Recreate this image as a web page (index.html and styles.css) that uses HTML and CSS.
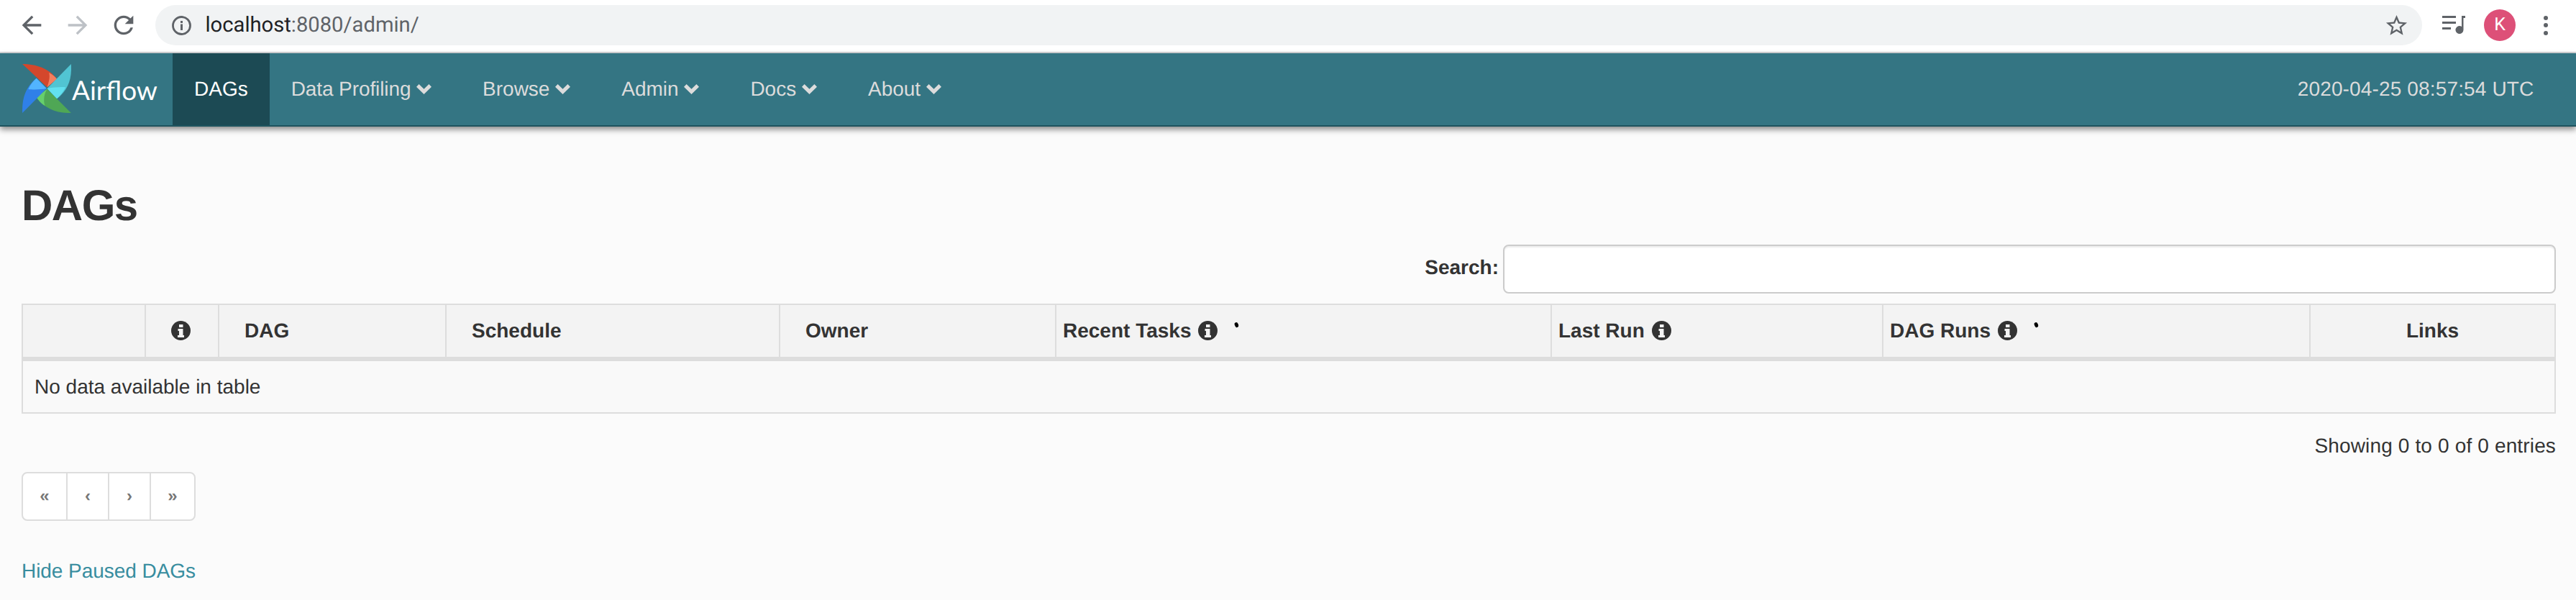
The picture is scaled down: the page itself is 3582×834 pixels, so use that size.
FILE: index.html
```html
<!DOCTYPE html>
<html lang="en">
<head>
<meta charset="utf-8">
<title>DAGs - Airflow</title>
<link rel="stylesheet" href="styles.css">
</head>
<body>
<svg class="defs" width="0" height="0" aria-hidden="true">
  <symbol id="info" viewBox="0 0 27 27">
    <circle cx="13.5" cy="13.5" r="13.5" fill="#333"/>
    <path fill="#f3f3f3" d="M11 5h5.5v4H11zM9.5 11h7v9H18v3H9v-3h2v-6H9.500z"/>
  </symbol>
  <symbol id="chev" viewBox="0 0 21 15">
    <path fill="currentColor" d="M0 5.200 3.600 1.500 10.500 8.300 17.400 1.500 21 5.200 10.500 15.500z"/>
  </symbol>
</svg>

<header class="toolbar">
  <span class="tool-btn"><svg class="ic40" viewBox="0 0 24 24"><path d="M20 11H7.830l5.590-5.590L12 4l-8 8 8 8 1.410-1.410L7.830 13H20v-2z"/></svg></span>
  <span class="tool-btn off"><svg class="ic40" viewBox="0 0 24 24"><path d="M12 4l-1.410 1.410L16.170 11H4v2h12.170l-5.580 5.590L12 20l8-8z"/></svg></span>
  <span class="tool-btn"><svg class="ic40" viewBox="0 0 24 24"><path d="M17.650 6.350A7.958 7.958 0 0 0 12 4c-4.420 0-7.990 3.580-7.990 8s3.570 8 7.990 8c3.730 0 6.840-2.550 7.730-6h-2.080A5.990 5.990 0 0 1 12 18c-3.310 0-6-2.690-6-6s2.690-6 6-6c1.660 0 3.140.690 4.220 1.780L13 11h7V4l-2.350 2.350z"/></svg></span>
  <div class="omnibox">
    <svg class="site-info" viewBox="0 0 27 27"><circle cx="13.500" cy="13.500" r="12" fill="none" stroke="#5f6368" stroke-width="2.800"/><path fill="#5f6368" d="M12 11.500h3V20h-3zM12 7h3v3h-3z"/></svg>
    <span class="url"><span class="host">localhost</span>:8080/admin/</span>
    <svg class="star" viewBox="0 0 24 24"><path d="M22 9.240l-7.190-.620L12 2 9.190 8.630 2 9.240l5.460 4.730L5.820 21 12 17.270 18.180 21l-1.630-7.030L22 9.240zM12 15.400l-3.760 2.270 1-4.280-3.320-2.880 4.380-.380L12 6.100l1.710 4.040 4.380.380-3.320 2.880 1 4.280L12 15.400z"/></svg>
  </div>
  <svg class="media" viewBox="0 0 32 26"><path d="M0 0h19v3H0zM0 8h19v3H0zM0 16h12v3H0zM27 0h5v3h-2.500v16.500a5.500 5.500 0 1 1-2.500-4.600z"/></svg>
  <span class="avatar">K</span>
  <span class="dots"><i></i><i></i><i></i></span>
</header>

<nav class="navbar">
  <a class="brand">
    <svg class="logo" viewBox="93 92 205 206">
      <path fill="#d4472c" d="M93 92C150 92 205 110 238 155L197 190Z"/>
      <path fill="#f47f5f" d="M205 128C222 138 232 146 238 155L197 190C205 165 210 148 205 128Z"/>
      <path fill="#51c4d2" d="M298 92C302 150 288 200 238 238L197 195Z"/>
      <path fill="#62e0ef" d="M197 195C225 190 255 188 275 190C265 210 250 228 238 238Z"/>
      <path fill="#4fa755" d="M298 298C240 300 185 280 152 232L197 197Z"/>
      <path fill="#66cf6c" d="M197 197L152 232C165 250 175 260 188 268C180 245 185 215 197 197Z"/>
      <path fill="#2f80e8" d="M93 298C90 240 105 190 152 152L195 195Z"/>
      <path fill="#52b4ff" d="M152 152L195 195C170 200 135 200 118 198C125 180 138 165 152 152Z"/>
    </svg>
    <span class="brand-name">Airflow</span>
  </a>
  <a class="nav-item active">DAGs</a>
  <a class="nav-item menu tight">Data Profiling <svg class="chev"><use href="#chev"/></svg></a>
  <a class="nav-item menu">Browse <svg class="chev"><use href="#chev"/></svg></a>
  <a class="nav-item menu">Admin <svg class="chev"><use href="#chev"/></svg></a>
  <a class="nav-item menu">Docs <svg class="chev"><use href="#chev"/></svg></a>
  <a class="nav-item menu">About <svg class="chev"><use href="#chev"/></svg></a>
  <span class="clock">2020-04-25 08:57:54 UTC</span>
</nav>

<main class="page">
  <h1 class="title">DAGs</h1>
  <div class="search-row">
    <label class="search-label" for="q">Search:</label>
    <input class="search-input" id="q" type="search">
  </div>
  <table class="dags">
    <colgroup>
      <col class="c1"><col class="c2"><col class="c3"><col class="c4"><col class="c5"><col class="c6"><col class="c7"><col class="c8"><col class="c9">
    </colgroup>
    <thead>
      <tr>
        <th></th>
        <th class="center icon-col"><svg class="info"><use href="#info"/></svg></th>
        <th class="wide">DAG</th>
        <th class="wide">Schedule</th>
        <th class="wide">Owner</th>
        <th>Recent Tasks <svg class="info spaced"><use href="#info"/></svg><i class="tick"></i></th>
        <th>Last Run <svg class="info spaced"><use href="#info"/></svg></th>
        <th>DAG Runs <svg class="info spaced"><use href="#info"/></svg><i class="tick"></i></th>
        <th class="center">Links</th>
      </tr>
    </thead>
    <tbody>
      <tr><td colspan="9">No data available in table</td></tr>
    </tbody>
  </table>
  <div class="entries">Showing 0 to 0 of 0 entries</div>
  <div class="pager">
    <a>«</a><a>‹</a><a>›</a><a>»</a>
  </div>
  <a class="toggle">Hide Paused DAGs</a>
</main>
</body>
</html>
```

FILE: styles.css
```css
* { box-sizing: border-box; }
html, body { margin: 0; padding: 0; }
body {
  background: #fbfbfb;
  color: #333;
  font-family: "Liberation Sans", Arial, sans-serif;
  font-size: 28px;
  line-height: 40px;
  text-rendering: geometricPrecision;
  height: 834px;
  overflow: hidden;
}
.defs { position: absolute; }

/* browser toolbar */
.toolbar {
  display: flex;
  align-items: center;
  height: 74px;
  padding: 0 39px 2px 12px;
  background: #fff;
  border-bottom: 2px solid #d6d7d9;
}
.tool-btn { width: 64px; display: flex; justify-content: center; fill: #5f6368; }
.tool-btn.off { fill: #bdc1c6; }
.ic40 { width: 40px; height: 40px; display: block; }
.omnibox {
  flex: 1;
  margin-left: 12px;
  height: 56px;
  border-radius: 28px;
  background: #f1f3f4;
  display: flex;
  align-items: center;
  padding: 0 18px 0 23px;
}
.site-info { width: 27px; height: 27px; flex: none; }
.url {
  flex: 1;
  margin-left: 19.500px;
  font-family: Roboto, "Liberation Sans", sans-serif;
  font-size: 29.200px;
  color: #5f6368;
}
.host { color: #202124; }
.star { width: 35px; height: 35px; fill: #5f6368; }
.media { width: 32px; height: 26px; margin-left: 28px; fill: #5f6368; }
.avatar {
  width: 44px;
  height: 44px;
  margin-left: 26px;
  border-radius: 50%;
  background: #dd5078;
  color: #fff;
  font-family: Roboto, "Liberation Sans", sans-serif;
  font-size: 25px;
  line-height: 44px;
  text-align: center;
}
.dots { display: flex; flex-direction: column; gap: 4.500px; margin-left: 39px; }
.dots i { width: 6px; height: 6px; border-radius: 50%; background: #5f6368; }

/* airflow navbar */
.navbar {
  display: flex;
  align-items: stretch;
  height: 102px;
  background: #347583;
  border-bottom: 2px solid #1e545f;
  box-shadow: 0 4px 8px rgba(0, 0, 0, .45);
  position: relative;
  color: #dcdcdc;
}
.brand {
  width: 240px;
  padding-left: 31px;
  display: flex;
  align-items: center;
}
.logo { width: 68px; height: 68px; flex: none; margin-top: -2px; }
.brand-name {
  margin-left: 1px;
  font-family: Lato, "Liberation Sans", sans-serif;
  font-size: 37px;
  color: #fff;
  margin-top: 2px;
}
.nav-item { display: flex; align-items: center; padding: 0 30px; white-space: pre; }
.nav-item.active { background: #1c4a54; color: #fff; }
.nav-item.menu { padding-right: 41px; }
.nav-item.tight { letter-spacing: -.1px; }
.chev { width: 21px; height: 16px; margin-top: -3px; }
.clock { margin-left: auto; padding-right: 58.500px; align-self: center; letter-spacing: .15px; }

/* page */
.page { padding: 0 28px 0 30px; }
.title {
  margin: 77px 0 21px;
  font-size: 60px;
  line-height: 66px;
  font-weight: 700;
  letter-spacing: -1.500px;
}
.search-row { display: flex; justify-content: flex-end; align-items: flex-start; gap: 6px; }
.search-label { font-weight: 700; padding-top: 12px; }
.search-input {
  width: 1464px;
  height: 68px;
  background: #fff;
  border: 2px solid #ccc;
  border-radius: 8px;
  box-shadow: inset 0 2px 2px rgba(0, 0, 0, .075);
  outline: 0;
}

.dags {
  width: 100%;
  margin-top: 14px;
  table-layout: fixed;
  border-collapse: separate;
  border-spacing: 0;
  border: 2px solid #ddd;
  background: #f9f9f9;
}
.c1 { width: 171px; }
.c2 { width: 102px; }
.c3 { width: 316px; }
.c4 { width: 464px; }
.c5 { width: 384px; }
.c6 { width: 689px; }
.c7 { width: 461px; }
.c8 { width: 594px; }
.c9 { width: 339px; }
.dags th {
  height: 78px;
  padding: 0 0 0 9px;
  background: #f3f3f3;
  border-right: 2px solid #ddd;
  border-bottom: 6px solid #ddd;
  text-align: left;
  font-weight: 700;
}
.dags th:last-child { border-right: 0; }
.dags th.center { text-align: center; padding: 0; }
.dags th.icon-col { padding-right: 3px; }
.dags th.wide { padding-left: 35px; }
.info { width: 27px; height: 27px; display: inline-block; vertical-align: -4px; }
.info.spaced { margin-left: 2px; }
.tick {
  display: inline-block;
  width: 5px;
  height: 7px;
  margin-left: 24px;
  vertical-align: 14px;
  border-radius: 50% 50% 60% 40%;
  background: #000;
  transform: rotate(-25deg);
}
.dags td { height: 71px; padding: 0 16px; }

.entries { margin-top: 25px; text-align: right; letter-spacing: .15px; }
.pager {
  display: flex;
  margin-top: 16px;
  height: 68px;
  width: 242px;
  background: #fff;
  border: 2px solid #ddd;
  border-radius: 8px;
}
.pager a {
  flex: 0 0 58px;
  display: flex;
  align-items: center;
  justify-content: center;
  font-size: 24px;
  font-weight: 700;
  color: #777;
  border-right: 2px solid #ddd;
}
.pager a:first-child { flex-basis: 62px; }
.pager a:last-child { flex: 1; border-right: 0; }
.toggle { display: block; margin-top: 50px; color: #388d9f; letter-spacing: -.05px; }
```
